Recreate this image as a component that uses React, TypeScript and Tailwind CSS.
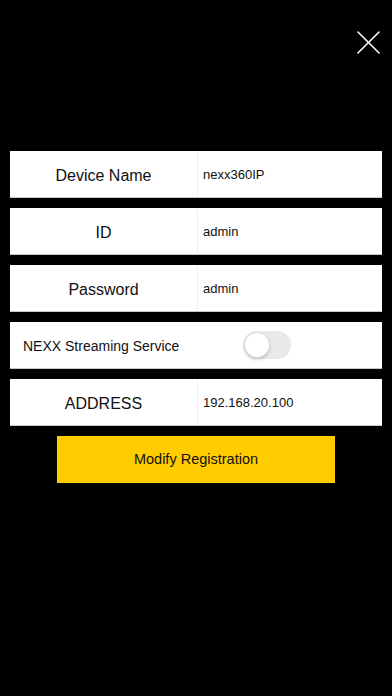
import React from 'react';

const font = { fontFamily: '"Liberation Sans", Arial, sans-serif' };

interface FieldRowProps {
  label: string;
  value: string;
}

const FieldRow: React.FC<FieldRowProps> = ({ label, value }) => {
  return (
    <div className="flex h-[47px] bg-white border-b border-[#c8c8c8]">
      <div className="w-[187px] flex items-center justify-center pt-[3px] text-[16px] text-[#111]">
        {label}
      </div>
      <div className="flex-1 flex items-center border-l border-[#ececec] my-[2px] pl-[5px] pt-[2px] text-[13px] text-[#111]">
        {value}
      </div>
    </div>
  );
};

export default function App() {
  return (
    <div className="w-[392px] h-[696px] bg-black flex flex-col" style={font}>
      <div className="flex justify-end pt-[31px] pr-[12px] h-[151px]">
        <button className="w-[23px] h-[23px]">
          <svg viewBox="0 0 24 24" width="23" height="23" stroke="white" strokeWidth="1.6" strokeLinecap="round">
            <path d="M1 1 L23 23 M23 1 L1 23" />
          </svg>
        </button>
      </div>

      <div className="flex flex-col gap-[10px] px-[10px]">
        <FieldRow label="Device Name" value="nexx360IP" />
        <FieldRow label="ID" value="admin" />
        <FieldRow label="Password" value="admin" />
        <div className="flex items-center h-[47px] bg-white border-b border-[#c8c8c8]">
          <div className="w-[233px] pl-[13px] pt-[2px] text-[14px] text-[#111]">NEXX Streaming Service</div>
          <div className="relative w-[48px] h-[28px] rounded-full bg-[#e9e9eb]">
            <div className="absolute left-[1px] top-[1px] w-[26px] h-[26px] rounded-full bg-white border border-[#dcdcdc] shadow-[0_2px_3px_rgba(0,0,0,0.15)]" />
          </div>
        </div>
        <FieldRow label="ADDRESS" value="192.168.20.100" />
      </div>

      <div className="flex justify-center pt-[10px]">
        <button className="w-[278px] h-[47px] bg-[#ffcc00] text-[14.5px] text-[#111]">
          Modify Registration
        </button>
      </div>
    </div>
  );
}
